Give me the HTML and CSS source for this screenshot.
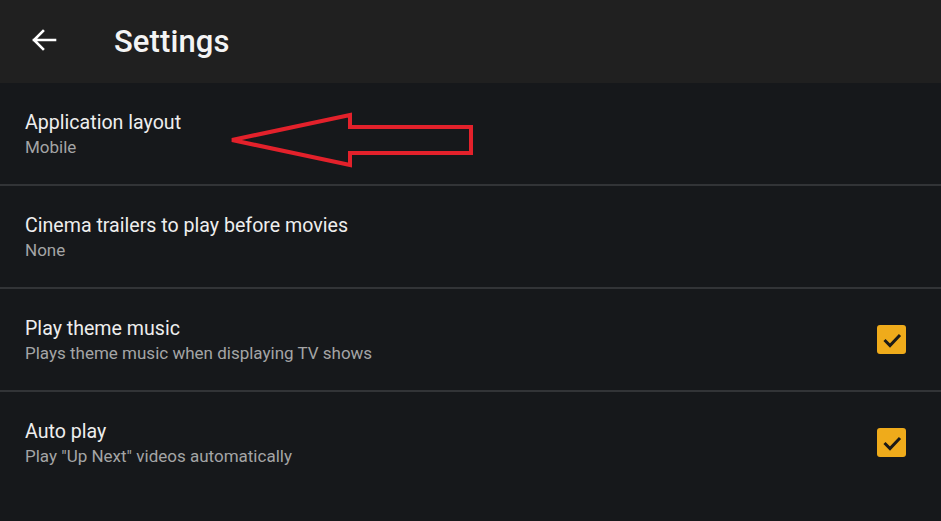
FILE: index.html
```html
<!DOCTYPE html>
<html lang="en">
<head>
  <meta charset="UTF-8" />
  <title>Settings</title>
  <link rel="stylesheet" href="styles.css">
</head>
<body>
  <header class="topbar">
    <svg class="back" width="26" height="24" viewBox="0 0 26 24">
      <path d="M24 12H3M12 3l-9 9 9 9" fill="none" stroke="#fff" stroke-width="2.6" stroke-linecap="square"/>
    </svg>
    <h1>Settings</h1>
  </header>

  <ul class="prefs">
    <li class="pref">
      <div class="text">
        <div class="title">Application layout</div>
        <div class="summary">Mobile</div>
      </div>
      <svg class="pointer" width="250" height="62" viewBox="0 0 250 62">
        <polygon points="3,28 121,3 121,15 242,15 242,41 121,41 121,53" fill="none" stroke="#e3212b" stroke-width="4" stroke-linejoin="miter"/>
      </svg>
    </li>
    <li class="pref">
      <div class="text">
        <div class="title">Cinema trailers to play before movies</div>
        <div class="summary">None</div>
      </div>
    </li>
    <li class="pref">
      <div class="text">
        <div class="title">Play theme music</div>
        <div class="summary">Plays theme music when displaying TV shows</div>
      </div>
      <span class="check">
        <svg width="20" height="16" viewBox="0 0 20 16"><path d="M2.5 8l5.5 5.5L18 3" fill="none" stroke="#1b1a17" stroke-width="3"/></svg>
      </span>
    </li>
    <li class="pref">
      <div class="text">
        <div class="title">Auto play</div>
        <div class="summary">Play "Up Next" videos automatically</div>
      </div>
      <span class="check">
        <svg width="20" height="16" viewBox="0 0 20 16"><path d="M2.5 8l5.5 5.5L18 3" fill="none" stroke="#1b1a17" stroke-width="3"/></svg>
      </span>
    </li>
  </ul>
</body>
</html>
```

FILE: styles.css
```css
body {
  margin: 0;
  background: #16181b;
  color: #f2f2f2;
  font-family: Roboto, 'Noto Sans', sans-serif;
  height: 521px;
  overflow: hidden;
}

.topbar {
  height: 83px;
  background: #202020;
  display: flex;
  align-items: center;
  padding-left: 31px;
  box-sizing: border-box;
}

.back {
  margin-top: -4px;
}

.topbar h1 {
  margin: 0 0 0 57px;
  font-size: 31px;
  font-weight: 500;
  color: #f4f4f4;
  letter-spacing: 0.1px;
}

.prefs {
  list-style: none;
  margin: 0;
  padding: 0;
}

.pref {
  height: 101px;
  border-bottom: 2px solid #323437;
  display: flex;
  align-items: center;
  padding: 0 35px 0 25px;
  position: relative;
}

.pref:last-child {
  border-bottom: none;
}

.text {
  flex: 1;
  margin-top: 1px;
}

.title {
  font-size: 19.6px;
  line-height: 25px;
  color: #eeeeee;
}

.summary {
  font-size: 17px;
  line-height: 24px;
  color: #a4a5a6;
}

.pointer {
  position: absolute;
  left: 229px;
  top: 29px;
}

.check {
  width: 29px;
  height: 29px;
  border-radius: 3px;
  background: #efab1b;
  display: flex;
  align-items: center;
  justify-content: center;
}
```
